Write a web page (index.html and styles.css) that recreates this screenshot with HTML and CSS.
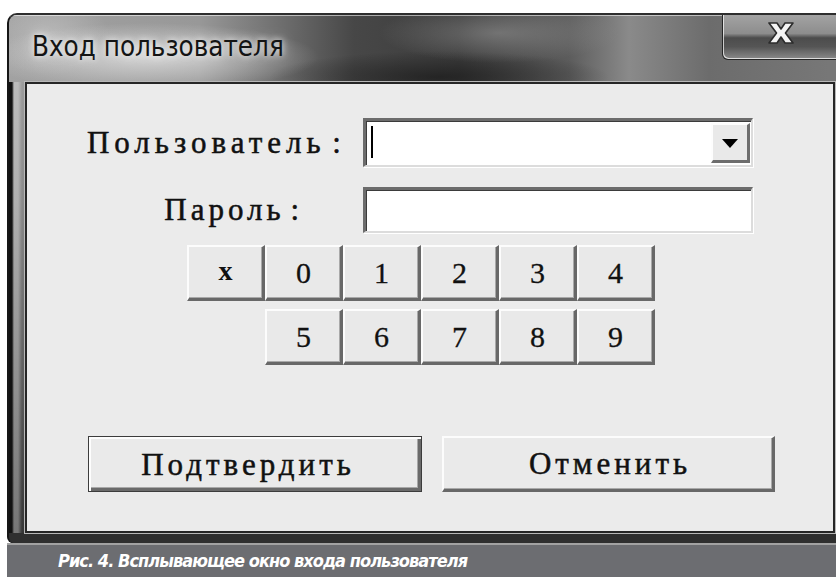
FILE: index.html
```html
<!DOCTYPE html>
<html lang="ru">
<head>
<meta charset="utf-8">
<title>Вход пользователя</title>
<link rel="stylesheet" href="styles.css">
</head>
<body>
<div class="figure">
  <div class="window">
    <div class="titlebar">
      <span class="title">Вход пользователя</span>
      <button class="close" type="button" aria-label="Закрыть">
        <svg width="26" height="22" viewBox="0 0 26 22" aria-hidden="true">
          <polygon points="1,1 9,1 13,7 17,1 25,1 17.5,11 25,21 17,21 13,15 9,21 1,21 8.5,11" fill="#f4f4f4" stroke="#2c2c2c" stroke-width="1.6" stroke-linejoin="round"/>
        </svg>
      </button>
    </div>
    <div class="client">
      <div class="fields">
        <label class="label">Пользователь :</label>
        <div class="combo">
          <span class="caret"></span>
          <span class="drop">
            <svg width="16" height="9" viewBox="0 0 16 9" aria-hidden="true"><polygon points="0,0 16,0 8,9" fill="#000"/></svg>
          </span>
        </div>
        <label class="label label-short">Пароль :</label>
        <div class="edit"></div>
      </div>
      <div class="keypad">
        <button class="key key-x" type="button">x</button>
        <button class="key" type="button">0</button>
        <button class="key" type="button">1</button>
        <button class="key" type="button">2</button>
        <button class="key" type="button">3</button>
        <button class="key" type="button">4</button>
        <button class="key key-first" type="button">5</button>
        <button class="key" type="button">6</button>
        <button class="key" type="button">7</button>
        <button class="key" type="button">8</button>
        <button class="key" type="button">9</button>
      </div>
      <div class="actions">
        <button class="btn btn-default" type="button">Подтвердить</button>
        <button class="btn btn-cancel" type="button">Отменить</button>
      </div>
    </div>
  </div>
  <div class="caption">Рис. 4. Всплывающее окно входа пользователя</div>
</div>
</body>
</html>
```
FILE: styles.css
```css
html, body {
  margin: 0;
  background: #fff;
  overflow: hidden;
}

body {
  width: 836px;
  height: 577px;
}

.figure {
  padding: 13px 0 0 7px;
  display: flex;
  flex-direction: column;
}

/* Window frame: dark glass with a lighter left edge */
.window {
  height: 530px;
  box-sizing: border-box;
  border-top: 2px solid #2e2e2e;
  border-left: 2px solid #161616;
  border-top-left-radius: 10px;
  border-bottom-left-radius: 6px;
  overflow: hidden;
  display: flex;
  flex-direction: column;
  background:
    linear-gradient(to top, #2f2f2f 0 10px, transparent 10px),
    linear-gradient(to right, #121212 0 3px, rgba(255,255,255,0.32) 5px 9px, rgba(255,255,255,0) 13px),
    linear-gradient(to bottom, #a6a6a6, #8a8a8a 35%, #5c5c5c 70%, #333);
}

.titlebar {
  flex: none;
  height: 67px;
  display: flex;
  align-items: flex-start;
  box-shadow: inset 0 1px 0 rgba(255,255,255,0.55);
  background:
    radial-gradient(ellipse 170px 34px at 140px 42px, rgba(236,236,236,0.7), rgba(236,236,236,0)),
    radial-gradient(ellipse 120px 30px at 490px 18px, rgba(150,150,150,0.55), rgba(150,150,150,0)),
    radial-gradient(ellipse 170px 26px at 430px 62px, rgba(25,25,25,0.7), rgba(25,25,25,0)),
    radial-gradient(ellipse 60px 40px at 40px 20px, rgba(200,200,200,0.6), rgba(200,200,200,0)),
    linear-gradient(to right, #a2a2a2 0, #989898 190px, #6a6a6a 280px, #474747 345px, #3d3d3d 450px, #5c5c5c 560px, #8a8a8a 620px, #6c6c6c 700px, #777 820px);
}

.title {
  margin: 18px 0 0 23px;
  font-family: "DejaVu Sans Condensed", "DejaVu Sans", sans-serif;
  font-stretch: condensed;
  font-size: 27.5px;
  line-height: 27px;
  color: #141414;
  text-shadow: 0 0 6px rgba(255,255,255,0.9), 0 0 14px rgba(255,255,255,0.6);
}

.close {
  margin: 0 -20px 0 auto;
  width: 134px;
  height: 45px;
  padding: 7px 0 0 45px;
  box-sizing: border-box;
  display: flex;
  align-items: flex-start;
  border: 1px solid #262626;
  border-top: none;
  border-radius: 0 0 0 6px;
  background: linear-gradient(to bottom, #a3a3a3 0%, #8d8d8d 42%, #4c4c4c 52%, #555 72%, #8a8a8a 100%);
  box-shadow: inset 1px -1px 0 rgba(255,255,255,0.7);
}

/* Client area */
.client {
  flex: none;
  margin-left: 16px;
  width: 810px;
  height: 451px;
  box-sizing: border-box;
  border: 2px solid #262626;
  background: #ebebeb;
  box-shadow: 0 0 0 1px #b8b8b8;
}

.fields {
  margin-top: 34px;
  display: grid;
  grid-template-columns: 336px 390px;
  grid-template-rows: 49px 46px;
  row-gap: 20px;
}

/* Dialog font: serif with wide, typewriter-like spacing */
.label,
.btn {
  font-family: "Liberation Serif", "Times New Roman", serif;
  font-size: 31px;
  color: #111;
  -webkit-text-stroke: 0.5px #111;
}

.label {
  align-self: center;
  text-align: right;
  padding-right: 17px;
  letter-spacing: 5px;
  word-spacing: -6px;
  line-height: 36px;
}

.label-short {
  padding-right: 60px;
  letter-spacing: 4px;
}

.combo,
.edit {
  box-sizing: border-box;
  background: #fff;
  border-top: 3px solid #6c6c6c;
  border-left: 3px solid #6c6c6c;
  border-bottom: 2px solid #dcdcdc;
  border-right: 2px solid #dcdcdc;
  box-shadow: inset 1px 1px 0 #3b3b3b, 1px 1px 0 #fff;
}

.combo {
  display: flex;
  align-items: flex-start;
}

.caret {
  width: 2px;
  height: 32px;
  margin: 5px 0 0 5px;
  background: #000;
}

.drop {
  margin: 2px 1px 0 auto;
  width: 39px;
  height: 40px;
  box-sizing: border-box;
  display: flex;
  align-items: center;
  justify-content: center;
  padding-top: 2px;
  background: #e9e9e9;
  border-top: 2px solid #fdfdfd;
  border-left: 2px solid #fdfdfd;
  border-bottom: 3px solid #6d6d6d;
  border-right: 3px solid #6d6d6d;
}

/* Digit keypad */
.keypad {
  margin: 12px 0 0 160px;
  display: grid;
  grid-template-columns: repeat(6, 78px);
  grid-auto-rows: 56px;
  row-gap: 8px;
}

.key {
  padding: 0;
  margin: 0;
  font-family: "Liberation Serif", "Times New Roman", serif;
  font-size: 30px;
  line-height: 1;
  color: #111;
  -webkit-text-stroke: 0.3px #111;
  background: #e9e9e9;
  border-top: 2px solid #fcfcfc;
  border-left: 2px solid #fcfcfc;
  border-bottom: 3px solid #686868;
  border-right: 3px solid #686868;
  box-shadow: inset -1px -1px 0 #a9a9a9;
}

.key-x {
  font-weight: bold;
  font-size: 28px;
  padding-bottom: 4px;
  -webkit-text-stroke: 0;
}

.key-first {
  grid-column-start: 2;
}

/* Confirm / cancel */
.actions {
  margin: 71px 0 0 61px;
  display: flex;
  gap: 20px;
}

.btn {
  height: 56px;
  padding: 0 0 0 4px;
  margin: 0;
  line-height: 1;
  letter-spacing: 4px;
  background: #eaeaea;
}

.btn-default {
  width: 334px;
  padding-right: 18px;
  border: 1px solid #3c3c3c;
  box-shadow: inset 2px 2px 0 #fdfdfd, inset -3px -3px 0 #6a6a6a, inset -4px -4px 0 #a8a8a8;
}

.btn-cancel {
  width: 333px;
  border-top: 2px solid #fcfcfc;
  border-left: 2px solid #fcfcfc;
  border-bottom: 3px solid #686868;
  border-right: 3px solid #686868;
  box-shadow: inset -1px -1px 0 #a9a9a9;
}

.caption {
  height: 34px;
  box-sizing: border-box;
  border-top: 2px solid #a2a2a2;
  background: #6c6d71;
  padding: 2px 0 0 51px;
  color: #fff;
  font-family: "DejaVu Sans Condensed", "DejaVu Sans", sans-serif;
  font-stretch: condensed;
  font-style: italic;
  font-weight: bold;
  font-size: 18px;
  line-height: 28px;
  letter-spacing: -0.95px;
}
```
